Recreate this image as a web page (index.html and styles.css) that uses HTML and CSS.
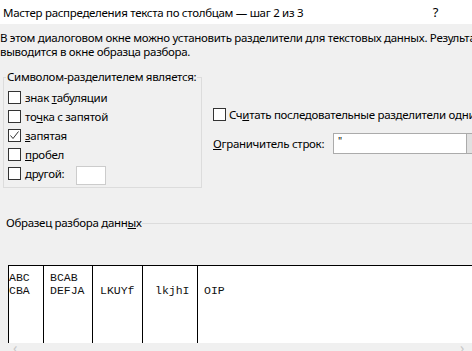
FILE: index.html
```html
<!DOCTYPE html>
<html lang="ru">
<head>
	<meta charset="UTF-8">
	<title>Мастер распределения текста по столбцам</title>
	<link rel="stylesheet" href="styles.css">
</head>
<body>
	<div class="titlebar">
		<span class="title">Мастер распределения текста по столбцам — шаг 2 из 3</span>
		<span class="help">?</span>
	</div>
	<div class="dialog">
		<div class="intro">
			<div class="line">В этом диалоговом окне можно установить разделители для текстовых данных. Результат</div>
			<div class="line">выводится в окне образца разбора.</div>
		</div>
		<div class="options">
			<fieldset class="groupbox">
				<legend>Символом-разделителем является:</legend>
				<label class="check"><span class="box"></span><span>знак <u>т</u>абуляции</span></label>
				<label class="check"><span class="box"></span><span>то<u>ч</u>ка с запятой</span></label>
				<label class="check"><span class="box"><svg width="11" height="11" viewBox="0 0 11 11"><path d="M1.5 5.5 L4 8.5 L9.5 1.5" fill="none" stroke="#333" stroke-width="1"/></svg></span><span><u>з</u>апятая</span></label>
				<label class="check"><span class="box"></span><span><u>п</u>робел</span></label>
				<label class="check"><span class="box"></span><span><u>д</u>ругой:</span><span class="other"></span></label>
			</fieldset>
			<div class="rightcol">
				<label class="check"><span class="box"></span><span>Сч<u>и</u>тать последовательные разделители одним</span></label>
				<div class="limiter">
					<span class="limiter-label"><u>О</u>граничитель строк:</span>
					<span class="combo"><span class="combo-value">"</span><span class="combo-btn"></span></span>
				</div>
			</div>
		</div>
		<div class="preview-label"><span>Образец разбора данн<u>ы</u>х</span></div>
		<div class="preview">
			<div class="col c1"><div>ABC</div><div>CBA</div></div>
			<div class="col c2"><div>BCAB</div><div>DEFJA</div></div>
			<div class="col c3"><div>&nbsp;</div><div>LKUYf</div></div>
			<div class="col c4"><div>&nbsp;</div><div>lkjhI</div></div>
			<div class="col c5"><div>&nbsp;</div><div>OIP</div></div>
		</div>
		<div class="hscroll"><span>&lsaquo;</span><span>&rsaquo;</span></div>
	</div>
</body>
</html>
```

FILE: styles.css
```css
html, body {
	margin: 0;
	padding: 0;
	width: 472px;
	height: 351px;
	overflow: hidden;
	background: rgb(240, 240, 240);
}

body {
	font-family: "Noto Sans", "Open Sans", sans-serif;
	font-size: 11.5px;
	letter-spacing: -0.3px;
	color: rgb(0, 0, 0);
}

.titlebar {
	height: 24px;
	background: rgb(255, 255, 255);
	display: flex;
	align-items: center;
	padding-left: 3px;
	white-space: nowrap;
}

.help {
	margin-left: auto;
	padding-right: 34px;
	font-size: 13px;
}

.dialog {
	width: 620px;
}

.intro {
	padding-top: 7px;
	line-height: 14px;
	white-space: nowrap;
}

.options {
	display: flex;
	margin-top: 11px;
}

.groupbox {
	flex: none;
	margin: 0 0 0 3px;
	width: 199px;
	box-sizing: border-box;
	padding: 4px 0 4px 4px;
	border: 1px solid rgb(220, 220, 220);
	border-radius: 0;
	min-width: 0;
}

.groupbox legend {
	padding: 0 1px;
	margin-left: -2px;
	line-height: 14px;
	white-space: nowrap;
}

.check {
	display: flex;
	align-items: center;
	height: 19px;
	white-space: nowrap;
}

.box {
	flex: none;
	width: 13px;
	height: 13px;
	box-sizing: border-box;
	border: 1px solid rgb(51, 51, 51);
	background: rgb(255, 255, 255);
	margin-right: 4px;
	display: flex;
	align-items: center;
	justify-content: center;
}

.other {
	display: inline-block;
	width: 30px;
	height: 19px;
	box-sizing: border-box;
	margin-left: 12px;
	margin-top: 3px;
	background: rgb(255, 255, 255);
	border: 1px solid rgb(204, 204, 204);
}

.rightcol {
	margin-left: 11px;
	padding-top: 35px;
}

.rightcol .box {
	margin-right: 3px;
}

.limiter {
	display: flex;
	align-items: center;
	margin-top: 9px;
	white-space: nowrap;
}

.limiter-label {
	flex: none;
	width: 120px;
}

.combo {
	display: flex;
	height: 21px;
}

.combo-value {
	width: 134px;
	box-sizing: border-box;
	border: 1px solid rgb(171, 171, 171);
	background: rgb(255, 255, 255);
	padding-left: 4px;
	font-size: 10px;
	line-height: 14px;
}

.combo-btn {
	width: 20px;
	box-sizing: border-box;
	border: 1px solid rgb(171, 171, 171);
	border-left: none;
	background: rgb(225, 225, 225);
}

.preview-label {
	display: flex;
	align-items: center;
	margin-top: 28px;
	padding-left: 6px;
	line-height: 14px;
	white-space: nowrap;
}

.preview-label::after {
	content: "";
	flex: 1;
	height: 1px;
	margin-top: 1px;
	background: rgb(220, 220, 220);
}

.preview {
	display: flex;
	margin: 35px 0 0 8px;
	height: 77px;
	border-top: 1px solid rgb(0, 0, 0);
	border-left: 1px solid rgb(0, 0, 0);
	background: rgb(255, 255, 255);
	font-family: "Liberation Mono", monospace;
	font-size: 11.5px;
	letter-spacing: 0;
	line-height: 13px;
	color: rgb(17, 17, 17);
}

.col {
	padding-top: 5px;
	box-sizing: border-box;
	border-right: 1px solid rgb(0, 0, 0);
	white-space: nowrap;
}

.c1 { width: 35px; padding-left: 0; }
.c2 { width: 49px; padding-left: 6px; }
.c3 { width: 50px; padding-left: 7px; }
.c4 { width: 55px; padding-left: 12px; }
.c5 { flex: 1; padding-left: 6px; border-right: none; }

.hscroll {
	display: flex;
	justify-content: space-between;
	height: 9px;
	width: 472px;
	padding: 0 8px 0 13px;
	box-sizing: border-box;
	color: rgb(200, 200, 200);
	font-size: 14px;
	line-height: 9px;
}
```
